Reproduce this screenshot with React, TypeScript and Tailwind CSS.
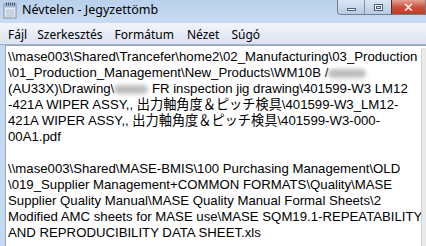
export default function App() {
  const ui = { fontFamily: '"Noto Sans", "Open Sans", sans-serif' };
  const body = {
    fontFamily: '"Liberation Sans", Arial, "Noto Sans CJK JP", sans-serif',
  };

  const Blur = ({ w }: { w: number }) => (
    <span
      className="inline-block h-[9px] align-middle rounded-full bg-[#bdbdbd] blur-[2px]"
      style={{ width: w }}
    />
  );

  return (
    <div className="w-[426px] h-[246px] overflow-hidden bg-[#c4d9ef] flex flex-col" style={ui}>
      {/* Title bar */}
      <div className="h-[23px] shrink-0 flex items-start bg-gradient-to-b from-[#b9d1ec] to-[#c9dcf1] relative">
        <svg width="14" height="17" viewBox="0 0 14 17" className="ml-[3px] mt-[2px]">
          <rect x="1" y="2" width="12" height="14" fill="#e8eef6" stroke="#7f8ea3" />
          <rect x="1.5" y="2.5" width="11" height="3" fill="#9fb6d4" />
          {[3, 5, 7, 9, 11].map((x) => (
            <rect key={x} x={x} y="0.5" width="1" height="3" fill="#4a5666" />
          ))}
          {[8, 10, 12, 14].map((y) => (
            <line key={y} x1="3" x2="11" y1={y} y2={y} stroke="#a9b8cc" />
          ))}
        </svg>
        <span className="ml-[5px] mt-[1px] text-[12.5px] text-black leading-[18px]">
          Névtelen - Jegyzettömb
        </span>

        {/* Window buttons */}
        <div className="absolute right-0 top-0 flex h-[15px] rounded-bl-[4px] border border-t-0 border-[#6c7d94] overflow-hidden">
          <div className="w-[27px] bg-gradient-to-b from-[#dce7f4] to-[#b8cbe3] border-r border-[#7f92aa] flex items-center justify-center">
            <div className="w-[9px] h-[3px] bg-white border border-[#4d5c70] mt-[4px]" />
          </div>
          <div className="w-[27px] bg-gradient-to-b from-[#dce7f4] to-[#b8cbe3] border-r border-[#7f1a10] flex items-center justify-center">
            <div className="w-[9px] h-[7px] bg-white border border-[#4d5c70] flex items-center justify-center">
              <div className="w-[5px] h-[3px] border border-[#4d5c70] bg-[#dfe7f1]" />
            </div>
          </div>
          <div className="w-[33px] bg-gradient-to-b from-[#e5a195] via-[#c8533f] to-[#c23a23] flex items-center justify-center">
            <span className="text-white font-bold text-[13px] leading-none" style={{ fontFamily: '"DejaVu Sans", sans-serif' }}>
              ✕
            </span>
          </div>
        </div>
      </div>

      {/* Menu bar */}
      <div className="h-[22px] shrink-0 flex items-center pt-[2px] bg-gradient-to-b from-[#f2f5fb] to-[#dbe3f1] border-b border-[#a3b2c8] text-[12px] text-black">
        <span className="ml-[8px]">Fájl</span>
        <span className="ml-[10px]">Szerkesztés</span>
        <span className="ml-[12px]">Formátum</span>
        <span className="ml-[13px]">Nézet</span>
        <span className="ml-[12px]">Súgó</span>
      </div>

      {/* Edit area */}
      <div className="flex-1 min-h-0 flex pl-[5px]">
        <div className="flex-1 bg-white border-l border-t border-[#97a7bd] pl-[2px] pt-[3px] relative overflow-hidden">
          <div className="text-[13.2px] leading-[16px] text-black whitespace-pre" style={body}>
            <div>\\mase003\Shared\Trancefer\home2\02_Manufacturing\03_Production</div>
            <div>
              \01_Production_Management\New_Products\WM10B /<Blur w={38} />
            </div>
            <div>
              (AU33X)\Drawing\<Blur w={34} /> FR inspection jig drawing\401599-W3 LM12
            </div>
            <div>-421A WIPER ASSY,, 出力軸角度＆ピッチ検具\401599-W3_LM12-</div>
            <div>421A WIPER ASSY,, 出力軸角度＆ピッチ検具\401599-W3-000-</div>
            <div>00A1.pdf</div>
            <div>&nbsp;</div>
            <div>\\mase003\Shared\MASE-BMIS\100 Purchasing Management\OLD</div>
            <div>\019_Supplier Management+COMMON FORMATS\Quality\MASE</div>
            <div>Supplier Quality Manual\MASE Quality Manual Formal Sheets\2</div>
            <div>Modified AMC sheets for MASE use\MASE SQM19.1-REPEATABILITY</div>
            <div>AND REPRODUCIBILITY DATA SHEET.xls</div>
          </div>
          <div className="absolute right-0 top-[2px] bottom-0 w-[5px] bg-[#e9e9e9] border-l border-[#d5d5d5]" />
        </div>
      </div>
    </div>
  );
}
